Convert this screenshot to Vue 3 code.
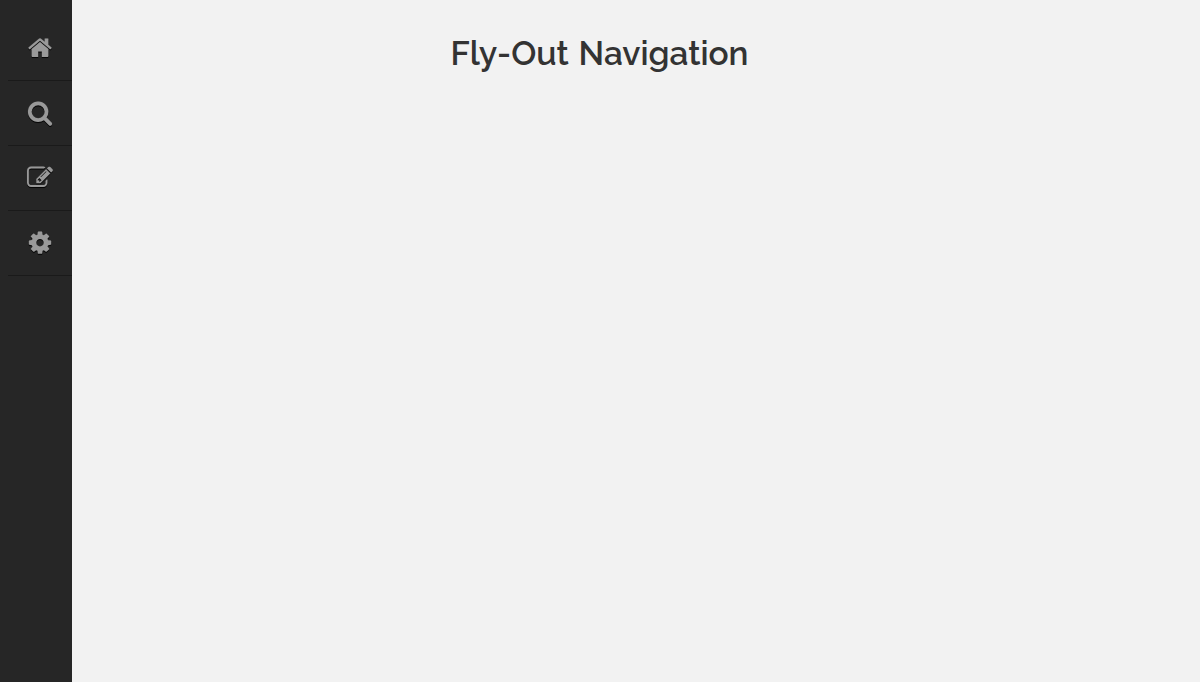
<template>
  <div class="page">
    <nav class="sidebar">
      <ul>
        <li v-for="item in items" :key="item.name">
          <a href="#" :aria-label="item.name" @click.prevent>
            <svg viewBox="0 22 1792 1792" class="icon">
              <path :d="item.path" />
            </svg>
          </a>
        </li>
      </ul>
    </nav>

    <header>
      <h1>Fly-Out Navigation</h1>
    </header>
  </div>
</template>

<script setup>
const items = [
  {
    name: "Home",
    path: "M1472 992v480q0 26-19 45t-45 19h-384v-384h-256v384h-384q-26 0-45-19t-19-45v-480q0-1 .5-3t.5-3l575-474 575 474q1 2 1 6zm223-69l-62 74q-8 9-21 11h-3q-13 0-21-7l-692-577-692 577q-12 8-24 7-13-2-21-11l-62-74q-8-10-7-23.5t11-21.5l719-599q32-26 76-26t76 26l244 204v-195q0-14 9-23t23-9h192q14 0 23 9t9 23v408l219 182q10 8 11 21.5t-7 23.5z",
  },
  {
    name: "Search",
    path: "M1216 832q0-185-131.5-316.5t-316.5-131.5-316.5 131.5-131.5 316.5 131.5 316.5 316.5 131.5 316.5-131.5 131.5-316.5zm512 832q0 52-38 90t-90 38q-54 0-90-38l-343-342q-179 124-399 124-143 0-273.5-55.5t-225-150-150-225-55.5-273.5 55.5-273.5 150-225 225-150 273.5-55.5 273.5 55.5 225 150 150 225 55.5 273.5q0 220-124 399l343 343q37 37 37 90z",
  },
  {
    name: "Edit",
    path: "M888 1184l116-116-152-152-116 116v56h96v96h56zm440-720q-16-16-33 1l-350 350q-17 17-1 33t33-1l350-350q17-17 1-33zm80 594v190q0 119-84.5 203.5t-203.5 84.5h-832q-119 0-203.5-84.5t-84.5-203.5v-832q0-119 84.5-203.5t203.5-84.5h832q63 0 117 25 15 7 18 23 3 17-9 29l-49 49q-14 14-32 8-23-6-45-6h-832q-66 0-113 47t-47 113v832q0 66 47 113t113 47h832q66 0 113-47t47-113v-126q0-13 9-22l64-64q15-15 35-7t20 29zm-96-738l288 288-672 672h-288v-288zm444 132l-92 92-288-288 92-92q28-28 68-28t68 28l152 152q28 28 28 68t-28 68z",
  },
  {
    name: "Settings",
    path: "M1152 896q0-106-75-181t-181-75-181 75-75 181 75 181 181 75 181-75 75-181zm512-109v222q0 12-8 23t-20 13l-185 28q-19 54-39 91 35 50 107 138 10 12 10 25t-9 23q-27 37-99 108t-94 71q-12 0-26-9l-138-108q-44 23-91 38-16 136-29 186-7 28-36 28h-222q-14 0-24.5-8.5t-11.5-21.5l-28-184q-49-16-90-37l-141 107q-10 9-25 9-14 0-25-11-126-114-165-168-7-10-7-23 0-12 8-23 15-21 51-66.5t54-70.5q-27-50-41-99l-183-27q-13-2-21-12.5t-8-23.5v-222q0-12 8-23t19-13l186-28q14-46 39-92-40-57-107-138-10-12-10-24 0-10 9-23 26-36 98.5-107.5t94.5-71.5q13 0 26 10l138 107q44-23 91-38 16-136 29-186 7-28 36-28h222q14 0 24.5 8.5t11.5 21.5l28 184q49 16 90 37l142-107q9-9 24-9 13 0 25 10 129 119 165 170 7 8 7 22 0 12-8 23-15 21-51 66.5t-54 70.5q26 50 41 98l183 28q13 2 21 12.5t8 23.5z",
  },
];
</script>

<style>
body {
  margin: 0;
  background: #f2f2f2;
}
</style>

<style scoped>
.page {
  min-height: 100vh;
  background: #f2f2f2;
}

.sidebar {
  position: fixed;
  top: 0;
  left: 0;
  box-sizing: border-box;
  width: 72px;
  height: 100vh;
  padding: 16px 0 0 8px;
  background: #262626;
}

ul {
  margin: 0;
  padding: 0;
  list-style: none;
}

li {
  border-bottom: 1px solid #1a1a1a;
}

a {
  display: flex;
  align-items: center;
  justify-content: center;
  height: 64px;
}

.icon {
  width: 26px;
  height: 26px;
  fill: #999;
  stroke: #999;
  stroke-width: 8px;
  overflow: visible;
  filter: drop-shadow(0 1px 0 #000);
}

header {
  padding: 33px 1px 0 0;
  text-align: center;
}

h1 {
  margin: 0;
  color: #333;
  font-family: Raleway, Lato, sans-serif;
  font-size: 33.4px;
  font-weight: 600;
  line-height: 42px;
  word-spacing: 1.5px;
}
</style>
